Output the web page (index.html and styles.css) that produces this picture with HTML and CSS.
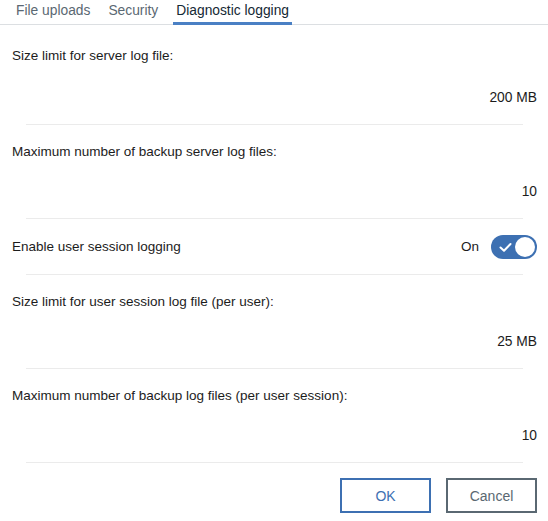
FILE: index.html
```html
<!DOCTYPE html>
<html>
<head>
<meta charset="utf-8">
<link rel="stylesheet" href="styles.css">
</head>
<body>
<div class="dialog">
  <nav class="tabs">
    <div class="tab">File uploads</div>
    <div class="tab">Security</div>
    <div class="tab active">Diagnostic logging</div>
  </nav>
  <div class="content">
    <div class="row first">
      <div class="label">Size limit for server log file:</div>
      <div class="value">200 MB</div>
    </div>
    <div class="sep"></div>
    <div class="row">
      <div class="label">Maximum number of backup server log files:</div>
      <div class="value">10</div>
    </div>
    <div class="sep"></div>
    <div class="row toggle-row">
      <div class="label">Enable user session logging</div>
      <div class="toggle-wrap">
        <span class="toggle-text">On</span>
        <svg class="toggle" width="46" height="24" viewBox="0 0 46 24">
          <rect x="0" y="0" width="46" height="24" rx="12" fill="#3d70b2"/>
          <circle cx="34" cy="12" r="10" fill="#fff"/>
          <path d="M9.5 12.5 L13 15.8 L19.5 9" fill="none" stroke="#fff" stroke-width="2" stroke-linecap="round" stroke-linejoin="round"/>
        </svg>
      </div>
    </div>
    <div class="sep"></div>
    <div class="row">
      <div class="label">Size limit for user session log file (per user):</div>
      <div class="value">25 MB</div>
    </div>
    <div class="sep"></div>
    <div class="row">
      <div class="label">Maximum number of backup log files (per user session):</div>
      <div class="value">10</div>
    </div>
    <div class="sep"></div>
  </div>
  <div class="actions">
    <button class="btn btn-primary">OK</button>
    <button class="btn btn-secondary">Cancel</button>
  </div>
</div>
</body>
</html>
```

FILE: styles.css
```css
html, body {
  margin: 0;
  padding: 0;
  background: #fff;
}
body {
  font-family: "Liberation Sans", Arial, sans-serif;
  font-size: 13.5px;
  line-height: 16px;
  color: #1c1c1c;
}
.dialog {
  width: 548px;
  height: 521px;
  display: flex;
  flex-direction: column;
}
.tabs {
  display: flex;
  gap: 12px;
  padding-left: 13px;
  border-bottom: 1px solid #dcdfe2;
  height: 24px;
  font-size: 13.8px;
}
.tab {
  padding: 3px 3px 0;
  color: #5a6872;
  height: 22px;
  box-sizing: border-box;
}
.tab.active {
  color: #152935;
  border-bottom: 3px solid #4a80c4;
  height: 25px;
}
.content {
  display: flex;
  flex-direction: column;
}
.row {
  display: flex;
  flex-direction: column;
  padding: 19px 11px 18px 12px;
  gap: 24px;
}
.row.first {
  padding-top: 23px;
  padding-bottom: 18px;
  gap: 26px;
}
.value {
  text-align: right;
  font-size: 13.8px;
}
.sep {
  height: 1px;
  background: #ebebeb;
  margin: 0 25px 0 26px;
}
.toggle-row {
  flex-direction: row;
  align-items: center;
  justify-content: space-between;
  padding-top: 16px;
  padding-bottom: 15px;
}
.toggle-wrap {
  display: flex;
  align-items: center;
  gap: 12px;
}
.toggle {
  display: block;
}
.actions {
  display: flex;
  justify-content: flex-end;
  gap: 15px;
  padding: 15px 11px 0 0;
}
.btn {
  width: 91px;
  height: 35px;
  background: #fff;
  font-family: "Liberation Sans", Arial, sans-serif;
  font-size: 14px;
  border-width: 2px;
  border-style: solid;
  padding: 0;
  cursor: pointer;
}
.btn-primary {
  border-color: #3d70b2;
  color: #3d70b2;
}
.btn-secondary {
  border-color: #5a6872;
  color: #5a6872;
}
```
